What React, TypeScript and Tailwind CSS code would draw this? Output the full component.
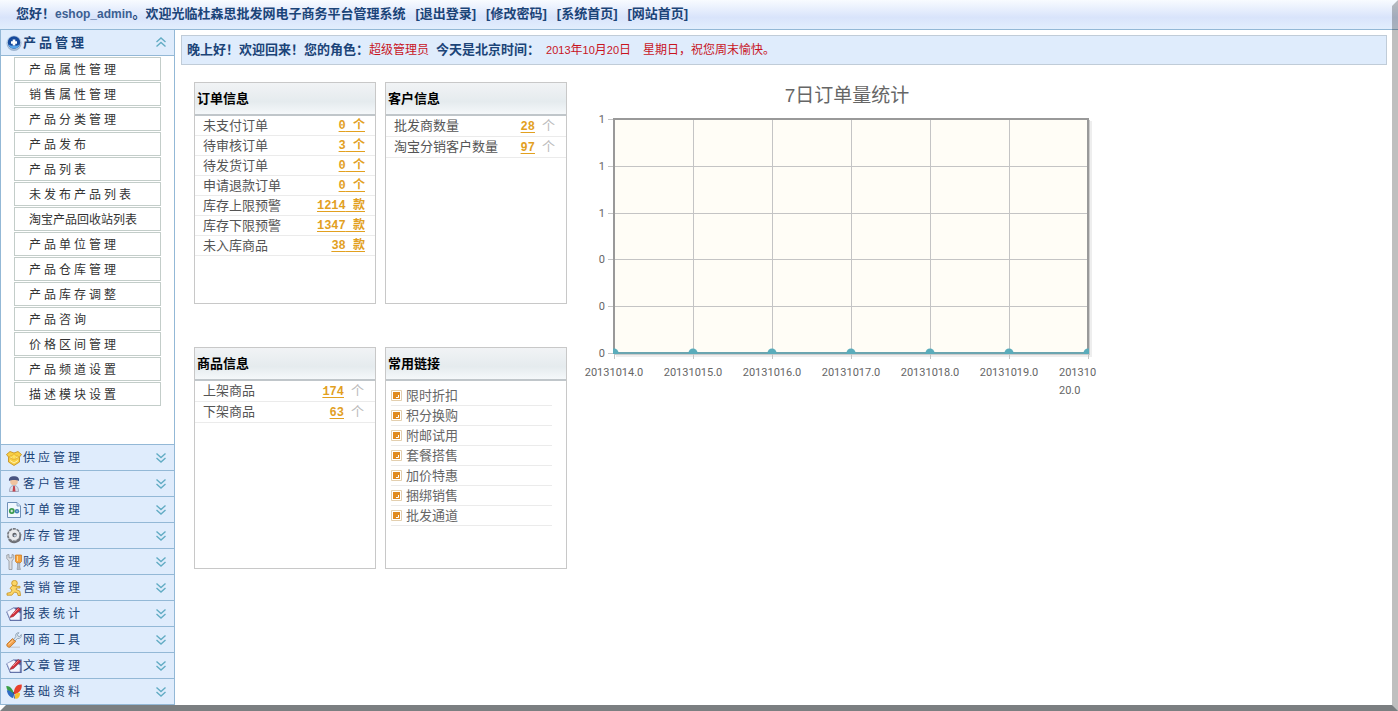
import React from "react";

const topLinks = ["退出登录", "修改密码", "系统首页", "网站首页"];

const productMenu = [
    "产品属性管理",
    "销售属性管理",
    "产品分类管理",
    "产品发布",
    "产品列表",
    "未发布产品列表",
    "淘宝产品回收站列表",
    "产品单位管理",
    "产品仓库管理",
    "产品库存调整",
    "产品咨询",
    "价格区间管理",
    "产品频道设置",
    "描述模块设置",
];

const orderRows = [
    { name: "未支付订单", count: 0, unit: "个" },
    { name: "待审核订单", count: 3, unit: "个" },
    { name: "待发货订单", count: 0, unit: "个" },
    { name: "申请退款订单", count: 0, unit: "个" },
    { name: "库存上限预警", count: 1214, unit: "款" },
    { name: "库存下限预警", count: 1347, unit: "款" },
    { name: "未入库商品", count: 38, unit: "款" },
];

const customerRows = [
    { name: "批发商数量", count: 28 },
    { name: "淘宝分销客户数量", count: 97 },
];

const goodsRows = [
    { name: "上架商品", count: 174 },
    { name: "下架商品", count: 63 },
];

const quickLinks = ["限时折扣", "积分换购", "附邮试用", "套餐搭售", "加价特惠", "捆绑销售", "批发通道"];

const Icon = ({ children }: { children: React.ReactNode }) => (
    <svg className="w-4 h-4 shrink-0" viewBox="0 0 16 16" aria-hidden="true">{children}</svg>
);

const PlusIcon = () => (
    <Icon>
        <circle cx="8" cy="8.5" r="7.5" fill="#9db4cf" />
        <circle cx="8" cy="7.5" r="7" fill="#b9cde4" />
        <circle cx="8" cy="7.5" r="6.2" fill="#164a9c" />
        <path d="M2.500 9a5.600 5.600 0 0 0 11 0c-1 2.500-10 2.500-11 0z" fill="#57a5ea" />
        <path d="M8 4.500v6M5 7.500h6" stroke="#fff" strokeWidth="2.600" />
    </Icon>
);

const BoxIcon = () => (
    <Icon>
        <path d="M.5 4.500 4 1.500 8 3l4-1.500 3.500 3-2 2.500v5L8 15.500 2.500 12V7z" fill="#f8cf45" stroke="#c28a16" strokeWidth=".8" />
        <path d="M2.500 7 8 9.500 13.500 7 8 4.500z" fill="#fff0a0" stroke="#d99e20" strokeWidth=".6" />
        <path d="m8 3 1 2.500 2.500.5-2 1.500.3 2L8 8.500l-1.800 1 .3-2-2-1.500L7 5.500z" fill="#ffe25b" stroke="#e5a51f" strokeWidth=".4" />
        <path d="M4 10.500 8 13l4-2.500" fill="none" stroke="#fff3b0" strokeWidth="1" />
    </Icon>
);

const UserIcon = () => (
    <Icon>
        <path d="M3.500 15.500c0-4 1.500-6 4.500-6s4.500 2 4.500 6z" fill="#d9dde9" stroke="#8d94ab" strokeWidth=".7" />
        <circle cx="8" cy="5.500" r="3.800" fill="#efc3a0" />
        <path d="M3 5C2.500 1.500 5 .3 8 .3s5.500 1.200 5 4.700C10.500 3.700 5.500 3.700 3 5z" fill="#4a5580" />
        <path d="m7.200 10-.7 5.500h3L8.800 10z" fill="#c5424d" />
    </Icon>
);

const OrderIcon = () => (
    <Icon>
        <path d="M1.500.5h9.500L14.500 4v11.500h-13z" fill="#f0f7ff" stroke="#6f90b8" />
        <path d="M11 .5V4h3.500" fill="#c7dcf0" stroke="#7e9dbf" strokeWidth=".8" />
        <circle cx="5.800" cy="9" r="2.900" fill="#38994b" />
        <circle cx="11" cy="9.200" r="2.200" fill="#3d7fb5" />
        <path d="M4.500 9h2.600M5.800 7.700v2.600M10.300 9.200h1.400" stroke="#fff" strokeWidth=".9" />
    </Icon>
);

const GearIcon = () => (
    <Icon>
        <path d="M2 11.500c2 4.500 9 5 12.500.5l1-6z" fill="#6e7076" />
        <circle cx="8" cy="7" r="6.200" fill="#d7d9dd" stroke="#73767c" strokeWidth="1.600" strokeDasharray="3 .9" />
        <circle cx="8" cy="7" r="5" fill="#e9eaed" />
        <circle cx="8.500" cy="7" r="2.200" fill="#5f6268" />
        <circle cx="9" cy="7.600" r="1.200" fill="#c4d3e6" />
    </Icon>
);

const FinanceIcon = () => (
    <Icon>
        <path d="M.8 1v3.500L3 7v8.500h3V7l1.800-2.500V1L6 .5v3.300H3V.5z" fill="#dcdee2" stroke="#85898f" strokeWidth=".7" />
        <path d="M9.500 1h6v6.500L14 9h-3L9.500 7.500z" fill="#f6a33b" stroke="#c9761c" strokeWidth=".7" />
        <path d="M11.500 2v5" stroke="#ffd896" strokeWidth="1" />
        <path d="M11.500 9h2.300v4l.7 2.500h-3.500l.5-2.500z" fill="#b9bdc2" stroke="#85898f" strokeWidth=".5" />
    </Icon>
);

const RunnerIcon = () => (
    <Icon>
        <circle cx="8.500" cy="3.200" r="2.800" fill="#fbd667" stroke="#c58f1c" strokeWidth=".8" />
        <path d="M6.500 5.500 4 8.500l2 1.500-1.500 2.500-3.500.7v2h4.800L8.500 12l3 1 .5 2.500h2.500l-.6-4.300L10 9.500l.5-1.500H14V6.300H10z" fill="#fbd667" stroke="#c58f1c" strokeWidth=".8" strokeLinejoin="round" />
    </Icon>
);

const ReportIcon = () => (
    <Icon>
        <path d="m.3 6 7-4.500L15.700 1.500v13.500H4z" fill="#5565a0" />
        <path d="m.8 5.500 7-3.500 6.500 5.500-.3 6.500H4.500z" fill="#f2f5ff" stroke="#8a97c2" strokeWidth=".6" />
        <path d="M5 9.500 12 1.500l2.800 2L7.500 10.500 4 11.500z" fill="#d22f3b" stroke="#8b1f2b" strokeWidth=".5" />
        <path d="m7 8 5.500-5.500" stroke="#f6a0a0" strokeWidth=".8" />
    </Icon>
);

const ToolIcon = () => (
    <Icon>
        <path d="M3 15.200h11" stroke="#c2c8d0" strokeWidth="1.200" />
        <path d="m7.500 7.500 2.300-2.800C9 2.500 10.500.5 13 .7l-1.700 2 .7 1.500 1.700.3 1.600-2C16 5 14 7 11.500 6.500L9 9z" fill="#d9e3ec" stroke="#7a91a8" strokeWidth=".7" />
        <path d="M1 12 6.500 6.500l3.200 3L4 15c-1.500 1-4-.8-3-3z" fill="#f3a04a" stroke="#b96d1f" strokeWidth=".8" />
        <path d="m2.500 12.500 4.500-4" stroke="#ffd7a0" strokeWidth="1" />
    </Icon>
);

const ButterflyIcon = () => (
    <Icon>
        <path d="M8 10C7 5 3.500 1.500.3 2 .5 5.500 2 8.500 8 10z" fill="#3a9f46" />
        <path d="M8 10C5 7 2 5.500.8 6.500c.8 4.500 3.500 7 6.200 7.500z" fill="#2d6bc4" />
        <path d="M8 10C7.500 4.500 10.500.3 15.700.6c.5 4.200-2 8.400-7.200 9.400z" fill="#e8402c" />
        <path d="M9 10.500c3-2.500 5.500-2 5 0-.5 3-2.500 5-5 4z" fill="#f7c22e" />
        <path d="m7.500 8 1 6.500" stroke="#2b3e66" strokeWidth=".8" />
    </Icon>
);

const modules = [
    { name: "供应管理", icon: <BoxIcon /> },
    { name: "客户管理", icon: <UserIcon /> },
    { name: "订单管理", icon: <OrderIcon /> },
    { name: "库存管理", icon: <GearIcon /> },
    { name: "财务管理", icon: <FinanceIcon /> },
    { name: "营销管理", icon: <RunnerIcon /> },
    { name: "报表统计", icon: <ReportIcon /> },
    { name: "网商工具", icon: <ToolIcon /> },
    { name: "文章管理", icon: <ReportIcon /> },
    { name: "基础资料", icon: <ButterflyIcon /> },
];

const Chevrons = ({ up }: { up?: boolean }) => (
    <svg className="ml-auto w-3 h-3 shrink-0" viewBox="0 0 12 12" fill="none" stroke="#62acc4" strokeWidth="1.4" aria-hidden="true">
        {up ? <path d="M1.500 5 6 1l4.500 4M1.500 9.500 6 5.500l4.500 4" /> : <path d="M1.500 1.500 6 5.500l4.500-4M1.500 6 6 10l4.500-4" />}
    </svg>
);

const Sidebar = () => (
    <nav className="w-[175px] shrink-0 flex flex-col border-x border-[#93b8d6]">
        <button className="h-[26px] w-full flex items-center pl-[5px] pr-[7px] bg-[#dfecfc] border-b border-[#93b8d6] text-[13px] font-bold tracking-[3px] text-[#1b4478]">
            <PlusIcon />
            <span className="ml-px">产品管理</span>
            <Chevrons up />
        </button>
        <ul className="flex flex-col gap-px pt-px px-[13px]">
            {productMenu.map((item) => (
                <li key={item}>
                    <a
                        href="#"
                        className={
                            item.length > 8
                                ? "h-6 flex items-center pt-[2px] pl-[14px] border border-[#c3cdc9] text-xs whitespace-nowrap text-[#333]"
                                : "h-6 flex items-center pt-[2px] pl-[14px] border border-[#c3cdc9] text-xs whitespace-nowrap text-[#333] tracking-[3px]"
                        }
                    >
                        {item}
                    </a>
                </li>
            ))}
        </ul>
        <div className="mt-auto border-b border-[#93b8d6]">
            {modules.map(({ name, icon }) => (
                <button key={name} className="h-[26px] w-full flex items-center pl-[5px] pr-[7px] bg-[#dfecfc] border-t border-[#93b8d6] text-xs tracking-[3px] text-[#1b4478]">
                    {icon}
                    <span className="ml-px">{name}</span>
                    <Chevrons />
                </button>
            ))}
        </div>
    </nav>
);

const Panel = ({ title, children }: { title: string; children: React.ReactNode }) => (
    <section className="h-[222px] border border-[#c8c8c8]">
        <h2 className="h-[33px] flex items-center pl-[2px] pt-px border-b-2 border-[#c0c6ca] bg-linear-to-b from-[#f1f3f5] via-[#e5ebee] via-60% to-[#f5f8fa] text-[13px] font-bold text-black">
            {title}
        </h2>
        {children}
    </section>
);

const CountTable = ({ rows }: { rows: { name: string; count: number }[] }) => (
    <table className="w-full border-separate border-spacing-0 text-[13px] leading-5 text-[#555]">
        <tbody>
            {rows.map((row) => (
                <tr key={row.name}>
                    <td className="h-[21px] p-0 pl-2 border-b border-[#ebebeb]">{row.name}</td>
                    <td className="h-[21px] p-0 pr-[11px] border-b border-[#ebebeb] text-right">
                        <a href="#" className="mr-[7px] font-['Liberation_Mono','Noto_Sans_CJK_SC',monospace] text-xs font-bold text-[#e2a01f] underline underline-offset-2">{row.count}</a>
                        <span className="text-[#bbb]">个</span>
                    </td>
                </tr>
            ))}
        </tbody>
    </table>
);

const days = ["20131014.0", "20131015.0", "20131016.0", "20131017.0", "20131018.0", "20131019.0"];
const xTicks = [33, 112, 191, 270, 349, 428, 507];
const yTicks = [
    { y: 37, label: "1" },
    { y: 84, label: "1" },
    { y: 131, label: "1" },
    { y: 177, label: "0" },
    { y: 224, label: "0" },
    { y: 271, label: "0" },
];

const OrderChart = () => (
    <svg className="w-[520px] h-[320px] shrink-0" viewBox="0 0 520 320" role="img" aria-label="7日订单量统计">
        <defs>
            <clipPath id="plot">
                <rect x="32" y="36" width="476" height="236" />
            </clipPath>
        </defs>
        <text x="266" y="20" textAnchor="middle" fill="#666" className="text-[19px]">
            7日订单量统计
        </text>
        <rect x="35" y="39" width="476" height="236" fill="#eee" />
        <rect x="34" y="38" width="475" height="235" fill="#ccc" />
        <rect x="33" y="37" width="474" height="234" fill="#fffdf6" />
        {xTicks.map((x) => (
            <path key={x} d={`M${x + 0.5} 37v240`} stroke="#c4c4c4" />
        ))}
        {yTicks.map(({ y }) => (
            <path key={y} d={`M27 ${y + 0.5}h480`} stroke="#c4c4c4" />
        ))}
        <rect x="33" y="37" width="474" height="234" fill="none" stroke="#999" strokeWidth="2" />
        <g clipPath="url(#plot)" fill="#5aacbb">
            <path d="M33 271h474" stroke="#6aa5b0" strokeWidth="2" />
            {xTicks.map((x) => (
                <circle key={x} cx={x} cy="271" r="4.500" />
            ))}
        </g>
        <g fill="#666" className="font-[Roboto,sans-serif] text-[11px]">
            {yTicks.map(({ y, label }) => (
                <text key={y} x="24" y={y + 4} textAnchor="end">{label}</text>
            ))}
            {days.map((day, i) => (
                <text key={day} x={xTicks[i]} y="294" textAnchor="middle">{day}</text>
            ))}
            <text x="478" y="294">201310</text>
            <text x="478" y="312">20.0</text>
        </g>
    </svg>
);

const App = () => (
    <div className="min-h-screen flex flex-col pb-[6px] bg-white font-['Liberation_Sans','Noto_Sans_CJK_SC',sans-serif]">
        <header className="h-[30px] flex items-center pb-[2px] pl-4 border-b border-[#93b8d6] bg-linear-to-b from-[#f8fbff] via-[#d9e4fb] via-60% to-[#e2eefd] text-[13px] font-bold text-[#1b4478] whitespace-nowrap">
            <span>您好！</span>
            <span className="text-xs text-[#3c5f92]">eshop_admin</span>
            <span>。欢迎光临杜森思批发网电子商务平台管理系统</span>
            <div className="ml-[10px] flex gap-[10px]">
                {topLinks.map((link) => (
                    <a key={link} href="#">[{link}]</a>
                ))}
            </div>
        </header>
        <div className="flex flex-1">
            <Sidebar />
            <main className="flex-1 min-w-0 pt-[5px] pl-[6px] pr-[11px]">
                <div className="h-[30px] flex items-center pl-[5px] border border-[#c0ccd8] bg-[#dfecfc] text-[13px] font-bold text-[#1b4478] whitespace-nowrap">
                    <span>晚上好！欢迎回来！您的角色：</span>
                    <span className="text-xs font-normal text-[#c8141e]">超级管理员</span>
                    <span className="ml-[7px]">今天是北京时间：</span>
                    <span className="ml-[6px] text-xs font-normal text-[#c8141e]">
                        <span className="text-[11px]">2013</span>年<span className="text-[11px]">10</span>月<span className="text-[11px]">20</span>日
                    </span>
                    <span className="ml-3 text-xs font-normal text-[#c8141e]">星期日，祝您周末愉快。</span>
                </div>
                <div className="flex items-start pt-[17px] pl-[13px]">
                    <div className="grid grid-cols-[182px_182px] gap-x-[9px] gap-y-[43px]">
                        <Panel title="订单信息">
                            <table className="w-full border-separate border-spacing-0 text-[13px] leading-[18px] text-[#555]">
                                <tbody>
                                    {orderRows.map((row) => (
                                        <tr key={row.name}>
                                            <td className="h-5 p-0 pl-2 border-b border-[#ebebeb]">{row.name}</td>
                                            <td className="h-5 p-0 pr-[10px] border-b border-[#ebebeb] text-right">
                                                <a href="#" className="font-['Liberation_Mono','Noto_Sans_CJK_SC',monospace] text-xs leading-[18px] font-bold text-[#e2a01f] underline underline-offset-2">
                                                    {row.count} {row.unit}
                                                </a>
                                            </td>
                                        </tr>
                                    ))}
                                </tbody>
                            </table>
                        </Panel>
                        <Panel title="客户信息">
                            <CountTable rows={customerRows} />
                        </Panel>
                        <Panel title="商品信息">
                            <CountTable rows={goodsRows} />
                        </Panel>
                        <Panel title="常用链接">
                            <ul className="pt-[5px] pl-[5px] pr-[14px]">
                                {quickLinks.map((link) => (
                                    <li key={link} className="h-5 border-b border-[#ebebeb]">
                                        <a href="#" className="h-full flex items-center gap-1 text-[13px] text-[#666]">
                                            <svg className="w-[11px] h-[11px]" viewBox="0 0 11 11" aria-hidden="true">
                                                <path d="M.5.5h10v10H.5z" fill="#fff" stroke="#e3cfae" />
                                                <path d="M2 2h7v7H2z" fill="#e08a1e" />
                                                <path d="M5 7.500h2.500V5" fill="none" stroke="#fff" />
                                            </svg>
                                            {link}
                                        </a>
                                    </li>
                                ))}
                            </ul>
                        </Panel>
                    </div>
                    <div className="ml-[14px]">
                        <OrderChart />
                    </div>
                </div>
            </main>
        </div>
        {/* bevelled window edge */}
        <div className="fixed inset-0 pointer-events-none border-[6px] border-t-transparent border-l-transparent border-r-black/25 border-b-[#7b7f81]" />
    </div>
);

export default App;
